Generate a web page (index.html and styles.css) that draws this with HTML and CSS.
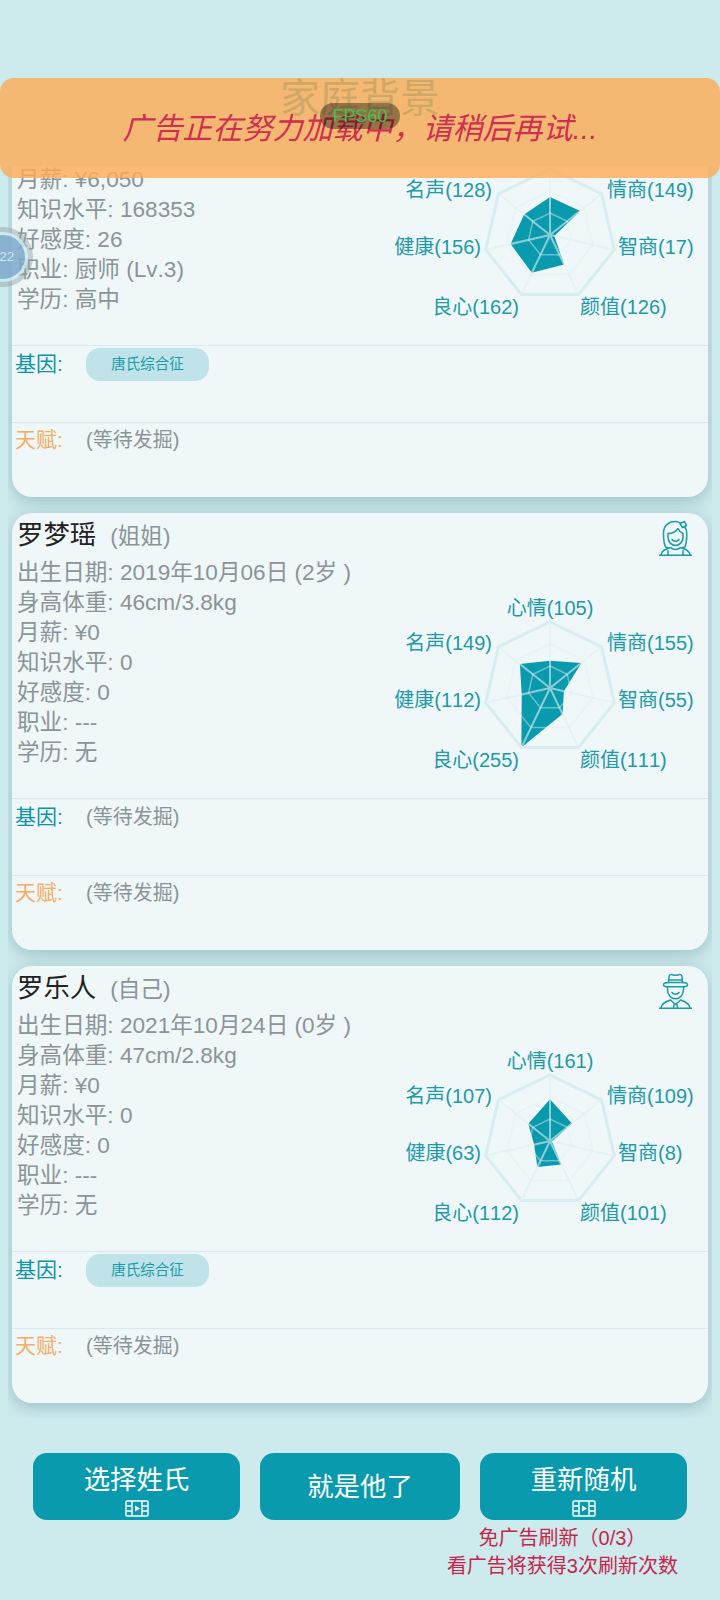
FILE: index.html
```html
<!DOCTYPE html>
<html lang="zh-CN">
<head>
    <meta charset="UTF-8">
    <meta name="viewport" content="width=device-width, initial-scale=1.0">
    <title>家庭背景</title>
    <link rel="stylesheet" href="styles.css">
</head>
<body>
    <svg class="defs" width="0" height="0">
        <defs>
            <!-- radar grid, centre at 0,0 -->
            <g id="radarGrid">
                <polygon class="ring-inner" points="0,-22 17.2,-13.7 21.4,4.9 9.5,19.8 -9.5,19.8 -21.4,4.9 -17.2,-13.7"/>
                <polygon class="ring-inner" points="0,-44 34.4,-27.4 42.9,9.8 19.1,39.6 -19.1,39.6 -42.9,9.8 -34.4,-27.4"/>
                <polygon class="ring-outer" points="0,-66 51.6,-41.2 64.3,14.7 28.6,59.5 -28.6,59.5 -64.3,14.7 -51.6,-41.2"/>
                <path class="spoke" d="M0 0L0 -66M0 0L51.6 -41.2M0 0L64.3 14.7M0 0L28.6 59.5M0 0L-28.6 59.5M0 0L-64.3 14.7M0 0L-51.6 -41.2"/>
            </g>
            <g id="filmIcon">
                <rect x="1" y="1" width="22" height="15" rx="1"/>
                <path d="M7 1V16M17 1V16M1 6H7M1 11H7M17 6H23M17 11H23"/>
                <polygon class="film-play" points="10,5.500 15,8.500 10,11.500"/>
            </g>
        </defs>
    </svg>

    <h1 class="page-title">家庭背景</h1>

    <div class="list">
        <div class="list-inner">

            <div class="card">
                <div class="card-top">
                    <div class="info">
                        <div class="name-row"><span class="name">唐某某</span><span class="relation">(父亲)</span></div>
                        <div class="stat">出生日期: 1990年03月12日 (31岁 )</div>
                        <div class="stat">身高体重: 176cm/68.5kg</div>
                        <div class="stat">月薪: ¥6,050</div>
                        <div class="stat">知识水平: 168353</div>
                        <div class="stat">好感度: 26</div>
                        <div class="stat">职业: 厨师 (Lv.3)</div>
                        <div class="stat">学历: 高中</div>
                    </div>
                    <div class="side">
                        <div class="avatar-slot"></div>
                        <svg class="radar" viewBox="-162 -90 320 180">
                            <polygon class="radar-value" points="0,-38 30.2,-24 4.3,1 14.1,29.4 -18.2,37.8 -39.4,9 -25.9,-20.6"/>
                            <use href="#radarGrid"/>
                            <text x="0" y="-73" text-anchor="middle">心情(147)</text>
                            <text x="57" y="-38">情商(149)</text>
                            <text x="68" y="19">智商(17)</text>
                            <text x="30" y="79">颜值(126)</text>
                            <text x="-31" y="79" text-anchor="end">良心(162)</text>
                            <text x="-69" y="19" text-anchor="end">健康(156)</text>
                            <text x="-58" y="-38" text-anchor="end">名声(128)</text>
                        </svg>
                    </div>
                </div>
                <div class="trait-row">
                    <span class="trait-label gene">基因:</span>
                    <span class="tag">唐氏综合征</span>
                </div>
                <div class="trait-row talent-row">
                    <span class="trait-label talent">天赋:</span>
                    <span class="pending">(等待发掘)</span>
                </div>
            </div>

            <div class="card">
                <div class="card-top">
                    <div class="info">
                        <div class="name-row"><span class="name">罗梦瑶</span><span class="relation">(姐姐)</span></div>
                        <div class="stat">出生日期: 2019年10月06日 (2岁 )</div>
                        <div class="stat">身高体重: 46cm/3.8kg</div>
                        <div class="stat">月薪: ¥0</div>
                        <div class="stat">知识水平: 0</div>
                        <div class="stat">好感度: 0</div>
                        <div class="stat">职业: ---</div>
                        <div class="stat">学历: 无</div>
                    </div>
                    <div class="side">
                        <div class="avatar-slot">
                            <svg class="avatar" viewBox="0 0 33 36">
                                <path d="M9 27.500H7C5 25 4.500 19 4.500 13C4.500 6 9.500 1.500 16 1.500C18 1.500 20 2 21.500 3M25.500 6.500C27 8.500 27.800 10.500 27.800 13C27.800 19 27.500 25 25.500 27.500H23.500"/>
                                <path d="M9 13.500C13 13.500 17 11.500 19 8.500C20 11 21.500 12.500 24 13.500V17C24 22 20.500 25.500 16.500 25.500C12.500 25.500 9 22 9 17Z"/>
                                <path d="M13 19.500C14.500 21.800 18.500 21.800 20 19.500"/>
                                <path d="M21 3.500L25.500 1.500L27.500 5.500L23.500 7.500Z"/>
                                <path d="M2 35C2.500 31 5 29 12 27.500C13 30 20 30 21 27.500C28 29 30.500 31 31 35"/>
                                <path d="M9 35V30.500M24 35V30.500"/>
                                <path d="M0 35.200H33"/>
                            </svg>
                        </div>
                        <svg class="radar" viewBox="-162 -90 320 180">
                            <polygon class="radar-value" points="0,-27.2 31.4,-25 13.9,3.2 12.5,25.9 -28.6,59.5 -28.3,6.5 -30.1,-24"/>
                            <use href="#radarGrid"/>
                            <text x="0" y="-73" text-anchor="middle">心情(105)</text>
                            <text x="57" y="-38">情商(155)</text>
                            <text x="68" y="19">智商(55)</text>
                            <text x="30" y="79">颜值(111)</text>
                            <text x="-31" y="79" text-anchor="end">良心(255)</text>
                            <text x="-69" y="19" text-anchor="end">健康(112)</text>
                            <text x="-58" y="-38" text-anchor="end">名声(149)</text>
                        </svg>
                    </div>
                </div>
                <div class="trait-row">
                    <span class="trait-label gene">基因:</span>
                    <span class="pending">(等待发掘)</span>
                </div>
                <div class="trait-row talent-row">
                    <span class="trait-label talent">天赋:</span>
                    <span class="pending">(等待发掘)</span>
                </div>
            </div>

            <div class="card">
                <div class="card-top">
                    <div class="info">
                        <div class="name-row"><span class="name">罗乐人</span><span class="relation">(自己)</span></div>
                        <div class="stat">出生日期: 2021年10月24日 (0岁 )</div>
                        <div class="stat">身高体重: 47cm/2.8kg</div>
                        <div class="stat">月薪: ¥0</div>
                        <div class="stat">知识水平: 0</div>
                        <div class="stat">好感度: 0</div>
                        <div class="stat">职业: ---</div>
                        <div class="stat">学历: 无</div>
                    </div>
                    <div class="side">
                        <div class="avatar-slot">
                            <svg class="avatar" viewBox="0 0 33 36">
                                <path d="M9.500 9.500L10 3.500C10.200 1.500 12 1 13.500 1.700C15.500 2.500 17.500 2.500 19.500 1.700C21 1 22.800 1.500 23 3.500L23.500 9.500"/>
                                <path d="M9.700 7H23.300"/>
                                <path d="M9.500 9.500C7 9.500 4.500 10 4.500 11.800C4.500 13.200 6 13.800 8 13.800H25C27 13.800 28.500 13.200 28.500 11.800C28.500 10 26 9.500 23.500 9.500Z"/>
                                <path d="M8.500 13.800V16.500C8.500 22 12.200 25.800 16.500 25.800C20.800 25.800 24.500 22 24.500 16.500V13.800"/>
                                <path d="M13 19.500C14.500 21.800 18.500 21.800 20 19.500"/>
                                <path d="M2 35C2.500 31 5 29 11.500 27L16.500 31.500L21.500 27C28 29 30.500 31 31 35"/>
                                <path d="M15 31.500L14.500 35M18 31.500L18.500 35"/>
                                <path d="M0 35.200H33"/>
                            </svg>
                        </div>
                        <svg class="radar" viewBox="-162 -90 320 180">
                            <polygon class="radar-value" points="0,-41.7 22,-17.6 2,0.5 11.3,23.5 -12.6,26.1 -15.9,3.6 -21.7,-17.3"/>
                            <use href="#radarGrid"/>
                            <text x="0" y="-73" text-anchor="middle">心情(161)</text>
                            <text x="57" y="-38">情商(109)</text>
                            <text x="68" y="19">智商(8)</text>
                            <text x="30" y="79">颜值(101)</text>
                            <text x="-31" y="79" text-anchor="end">良心(112)</text>
                            <text x="-69" y="19" text-anchor="end">健康(63)</text>
                            <text x="-58" y="-38" text-anchor="end">名声(107)</text>
                        </svg>
                    </div>
                </div>
                <div class="trait-row">
                    <span class="trait-label gene">基因:</span>
                    <span class="tag">唐氏综合征</span>
                </div>
                <div class="trait-row talent-row">
                    <span class="trait-label talent">天赋:</span>
                    <span class="pending">(等待发掘)</span>
                </div>
            </div>

        </div>
    </div>

    <div class="actions">
        <button class="btn">
            <span>选择姓氏</span>
            <svg class="film" viewBox="0 0 24 17"><use href="#filmIcon"/></svg>
        </button>
        <button class="btn btn-mid"><span>就是他了</span></button>
        <button class="btn">
            <span>重新随机</span>
            <svg class="film" viewBox="0 0 24 17"><use href="#filmIcon"/></svg>
        </button>
    </div>

    <div class="refresh-note">
        <div>
            <div>免广告刷新（0/3）</div>
            <div>看广告将获得3次刷新次数</div>
        </div>
    </div>

    <!-- overlays -->
    <div class="float-ball"><span>22</span></div>
    <div class="toast">广告正在努力加载中，请稍后再试...</div>
    <div class="fps">FPS60</div>
</body>
</html>
```

FILE: styles.css
```css
body {
    font-family: "Liberation Sans", "Noto Sans CJK SC", sans-serif;
    font-kerning: none;
    margin: 0;
    height: 1600px;
    overflow: hidden;
    position: relative;
    background-color: #cdeaed;
}
.defs {
    position: absolute;
}
.page-title {
    margin: 0;
    height: 166px;
    box-sizing: border-box;
    padding-top: 74px;
    font-size: 40px;
    line-height: 48px;
    font-weight: 400;
    text-align: center;
    color: #0a9aad;
}
.list {
    height: 1252px;
    margin: 0 8px;
    overflow: hidden;
}
.list-inner {
    margin-top: -106px;
}
.card {
    margin: 0 4px 16px;
    height: 437px;
    background-color: #eff7f9;
    border-radius: 20px;
    box-shadow: 0 4px 16px rgba(0,70,85,0.25);
}
.card-top {
    display: flex;
    justify-content: space-between;
    height: 286px;
    border-bottom: 1px solid #d8e8ec;
    box-sizing: border-box;
}
.info {
    padding-left: 5px;
    color: #8b9498;
    font-size: 22.6px;
}
.name-row {
    height: 45px;
    line-height: 44px;
}
.name {
    font-size: 26.4px;
    color: #222;
    margin-right: 14px;
}
.relation {
    color: #8b9498;
}
.stat {
    height: 30px;
    line-height: 30px;
    white-space: nowrap;
}
.side {
    width: 320px;
    flex-shrink: 0;
}
.avatar-slot {
    height: 36px;
    margin-top: 7px;
    padding-right: 16px;
    display: flex;
    justify-content: flex-end;
}
.avatar {
    width: 33px;
    height: 36px;
    fill: none;
    stroke: #1a9aab;
    stroke-width: 1.5;
    stroke-linejoin: round;
    stroke-linecap: round;
}
.radar {
    display: block;
    width: 320px;
    height: 180px;
    margin-top: 42px;
}
.radar text {
    font-size: 20px;
    fill: #1e9aa9;
}
.radar-value {
    fill: #0a9aad;
}
.ring-outer {
    fill: none;
    stroke: #d8edf0;
    stroke-width: 3;
}
.ring-inner {
    fill: none;
    stroke: #e0f0f3;
    stroke-width: 1.5;
    stroke-opacity: 0.45;
}
.spoke {
    fill: none;
    stroke: #dff0f3;
    stroke-width: 2;
    stroke-opacity: 0.6;
}
.trait-row {
    display: flex;
    align-items: flex-start;
    height: 77px;
    box-sizing: border-box;
    padding-top: 2px;
    padding-left: 3px;
    font-size: 21px;
    border-bottom: 1px solid #d8e8ec;
}
.talent-row {
    height: 74px;
    padding-top: 1px;
    border-bottom: none;
}
.trait-label {
    width: 71px;
    flex-shrink: 0;
    height: 33px;
    line-height: 31px;
}
.gene {
    color: #0d94a6;
}
.talent {
    color: #f5ad62;
}
.tag {
    width: 123px;
    height: 33px;
    line-height: 33px;
    text-align: center;
    font-size: 14.5px;
    color: #1a9aab;
    background-color: #bfe3e8;
    border-radius: 14px;
}
.pending {
    font-size: 20px;
    line-height: 33px;
    color: #8b9498;
}
.actions {
    display: flex;
    gap: 20px;
    margin-top: 35px;
    padding-left: 33px;
}
.btn {
    width: 207px;
    height: 67px;
    padding: 11px 0 0;
    border: none;
    border-radius: 14px;
    background-color: #0a9aad;
    color: #fff;
    font-family: inherit;
    font-size: 26.4px;
    line-height: 32px;
    display: flex;
    flex-direction: column;
    align-items: center;
}
.btn-mid {
    width: 200px;
    padding-top: 18px;
}
.film {
    width: 24px;
    height: 17px;
    margin-top: 4px;
    fill: none;
    stroke: #fff;
    stroke-width: 1.4;
}
.film-play {
    fill: #fff;
    stroke: none;
}
.refresh-note {
    display: flex;
    justify-content: flex-end;
    padding-right: 42px;
    margin-top: 4px;
    font-size: 20px;
    line-height: 28px;
    text-align: center;
    color: #c8254a;
}
.toast {
    position: absolute;
    top: 78px;
    left: 0;
    right: 0;
    height: 100px;
    box-sizing: border-box;
    padding-bottom: 4px;
    display: flex;
    align-items: center;
    justify-content: center;
    border-radius: 14px;
    background-color: rgba(255,171,84,0.8);
    color: #cf2f50;
    font-size: 30px;
    font-style: italic;
}
.fps {
    position: absolute;
    top: 103px;
    left: 320px;
    width: 80px;
    height: 26px;
    line-height: 26px;
    text-align: center;
    border-radius: 13px;
    background-color: rgba(0,0,0,0.38);
    color: #3fc24f;
    font-size: 18px;
}
.float-ball {
    position: absolute;
    top: 225px;
    left: -30px;
    width: 44px;
    height: 44px;
    margin: 7px 0 0 8px;
    border-radius: 50%;
    background-color: #7fa9cc;
    border: 3px solid #c8eef2;
    box-shadow: 0 0 0 5px rgba(150,160,165,0.55);
    color: #d5e4ef;
    font-size: 13px;
    line-height: 44px;
    text-align: right;
    opacity: 0.85;
}
.float-ball span {
    padding-right: 11px;
}
```
